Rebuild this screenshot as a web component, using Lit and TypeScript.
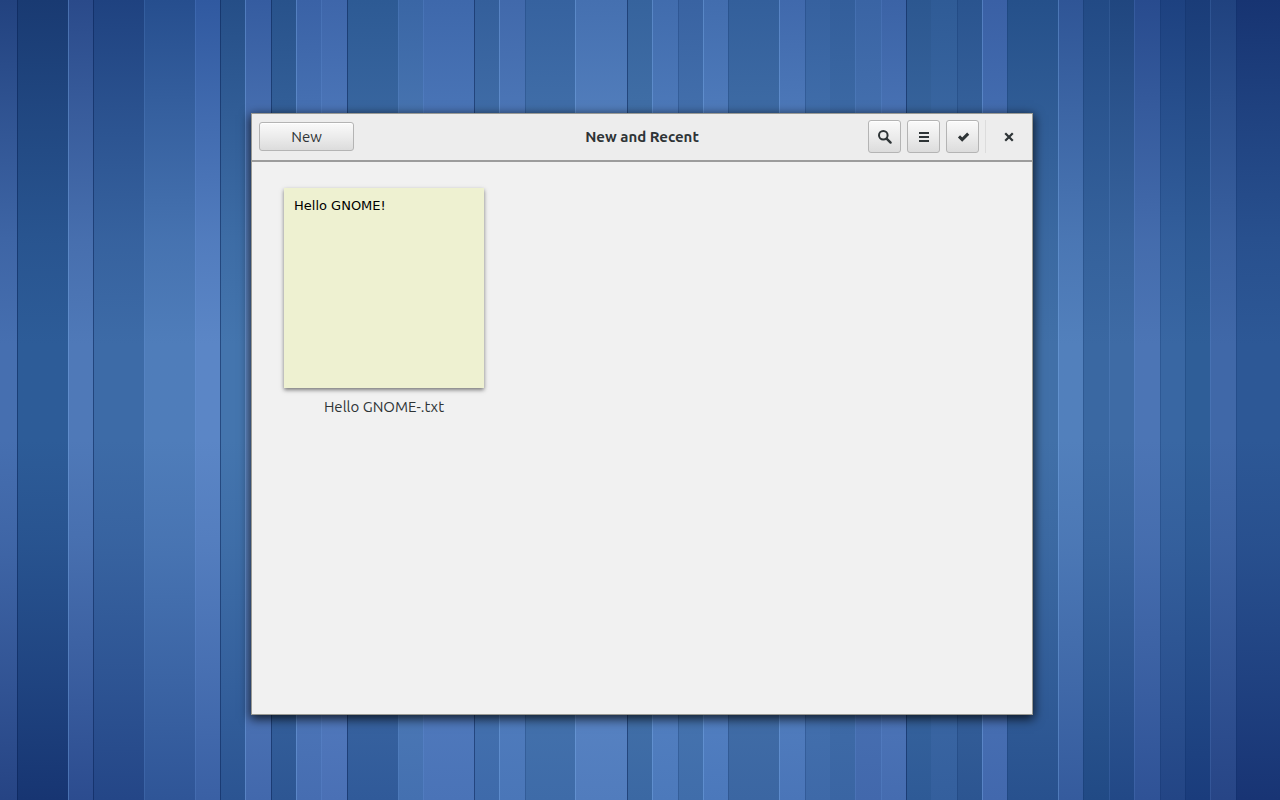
import { LitElement, html, css, svg } from "lit";
import { customElement, property } from "lit/decorators.js";

/* One band of the wallpaper: width in units, colours at the top, middle and bottom, and the kind of left edge. */
type Band = [number, string, string, string, string];

const BANDS: Band[] = [
  [17, "#22427f", "#466fb0", "#264484", "none"],
  [51, "#193a72", "#2d5c98", "#173572", "dark"],
  [25, "#2a4a8a", "#4f79b8", "#2c4c8f", "light"],
  [51, "#1f4280", "#3d6ba7", "#244687", "dark"],
  [51, "#264e8e", "#4f7dba", "#2f5597", "soft"],
  [25, "#3059a0", "#5b86c6", "#3a60a4", "soft"],
  [25, "#254e87", "#4475ae", "#2b5492", "dark"],
  [26, "#355ca0", "#6089c6", "#4268ac", "light"],
  [25, "#28528b", "#4474ad", "#2d5693", "dark"],
  [25, "#3a62a6", "#5a88c6", "#466db1", "light"],
  [26, "#3e66aa", "#5f8ccc", "#4a70b5", "soft"],
  [51, "#2d5a94", "#4a78b0", "#305a99", "dark"],
  [25, "#3a66a5", "#5a88c0", "#4470b0", "soft"],
  [51, "#3e68ab", "#5c88c8", "#4a73b7", "soft"],
  [25, "#345f9b", "#5080b8", "#3e6aaa", "dark"],
  [26, "#4169ab", "#5c8ac8", "#4a76b8", "light"],
  [50, "#36629f", "#5080b6", "#3e6ba8", "dim"],
  [52, "#4570b0", "#6592ce", "#517cbd", "light"],
  [25, "#36639d", "#5080b4", "#3b68a3", "dark"],
  [26, "#416cad", "#5f8dcc", "#4c79bb", "light"],
  [25, "#3963a2", "#5282ba", "#406daa", "dim"],
  [25, "#426dae", "#6290cf", "#4b78bb", "light"],
  [51, "#335f9b", "#4e7db2", "#3b66a2", "dim"],
  [26, "#4069ac", "#6090cc", "#4a75b8", "light"],
  [25, "#36619f", "#4f80ba", "#3e69a8", "dim"],
  [25, "#335e9b", "#4a7ab2", "#3a65a3", "none"],
  [26, "#3a64a4", "#5280bc", "#4268ac", "soft"],
  [25, "#3b63a6", "#5c88c8", "#456cb0", "soft"],
  [25, "#2c5790", "#4675ac", "#2e5a96", "dark"],
  [26, "#2f5b96", "#4876b0", "#345f9d", "none"],
  [25, "#2a548f", "#4674ac", "#2c5591", "dim"],
  [25, "#3a60a5", "#5280c0", "#4268ad", "light"],
  [51, "#25508a", "#4170a8", "#28518e", "dim"],
  [25, "#2f5596", "#5280bc", "#355b9d", "light"],
  [26, "#224a85", "#3a68a2", "#214a85", "dim"],
  [25, "#20467f", "#3e6ba5", "#224886", "soft"],
  [26, "#284b8e", "#4c75b5", "#2f5296", "soft"],
  [25, "#1d4180", "#3967a3", "#234585", "dim"],
  [25, "#1a3c78", "#2f5e98", "#1a3c7c", "dim"],
  [26, "#20427f", "#4068a8", "#274586", "soft"],
  [44, "#173472", "#2d5896", "#183474", "dim"],
];

@customElement("striped-wallpaper")
export class StripedWallpaper extends LitElement {
  static styles = css`
    :host {
      display: flex;
    }
    .band {
      flex: 1 1 0;
      box-sizing: border-box;
      min-width: 0;
    }
    .dark {
      box-shadow: inset 1px 0 rgba(8, 32, 84, 0.5);
    }
    .dim {
      box-shadow: inset 1px 0 rgba(8, 40, 96, 0.22);
    }
    .light {
      box-shadow: inset 1px 0 rgba(130, 180, 240, 0.35);
    }
    .soft {
      box-shadow: inset 1px 0 rgba(120, 170, 235, 0.16);
    }
  `;

  render() {
    return BANDS.map(
      ([size, top, middle, bottom, edge]) => html`<div
        class="band ${edge}"
        style="flex-grow:${size};background:linear-gradient(${top}, color-mix(in srgb, ${top} 62%, ${middle}) 14%, color-mix(in srgb, ${top} 22%, ${middle}) 30%, ${middle} 43%, ${middle} 55%, color-mix(in srgb, ${bottom} 22%, ${middle}) 68%, color-mix(in srgb, ${bottom} 62%, ${middle}) 85%, ${bottom})"
      ></div>`
    );
  }
}

const GLYPHS: Record<string, unknown> = {
  search: svg`<circle cx="7.3" cy="7.3" r="4.3" fill="none" stroke="currentColor" stroke-width="2"/><path d="M10.6 10.6L14.6 14.6" fill="none" stroke="currentColor" stroke-width="2.4" stroke-linecap="round"/>`,
  menu: svg`<path d="M4 4h10v2H4zM4 8h10v2H4zM4 12h10v2H4z" fill="currentColor"/>`,
  check: svg`<path d="M5 8.4L8.2 11.6L14.2 5.6" fill="none" stroke="currentColor" stroke-width="3"/>`,
  close: svg`<path d="M6 6L12 12M12 6L6 12" fill="none" stroke="currentColor" stroke-width="2.2" stroke-linecap="square"/>`,
};

@customElement("symbolic-icon")
export class SymbolicIcon extends LitElement {
  @property() name = "";

  static styles = css`
    :host {
      display: block;
      width: 17px;
      height: 17px;
    }
    .glyph {
      display: block;
      width: 100%;
      height: 100%;
    }
  `;

  render() {
    return html`<svg class="glyph" viewBox="0 0 17 17" aria-hidden="true">${GLYPHS[this.name]}</svg>`;
  }
}

@customElement("app-root")
export class AppRoot extends LitElement {
  static styles = css`
    :host {
      display: grid;
      box-sizing: border-box;
      min-height: 100vh;
      font: 15px/20px Ubuntu, "Noto Sans", sans-serif;
      color: #2e3436;
    }
    .wallpaper,
    .desktop {
      grid-area: 1 / 1;
    }
    .desktop {
      display: grid;
      padding: 113px 247px 85px 251px;
      z-index: 1;
    }
    .window {
      display: flex;
      flex-direction: column;
      min-width: 0;
      border: 1px solid #9a9a94;
      background: #f1f1f1;
      box-shadow: 0 3px 10px 1px rgba(0, 0, 0, 0.75);
    }
    .header {
      display: grid;
      grid-template-columns: 1fr auto 1fr;
      align-items: center;
      padding: 6px 7px 7px;
      background: #ededed;
      border-bottom: 2px solid #9c9c9c;
    }
    .title {
      margin: 0;
      font-size: 15px;
      line-height: 20px;
      font-weight: 700;
    }
    .actions {
      display: flex;
      justify-content: flex-end;
      gap: 6px;
    }
    .button {
      display: grid;
      place-items: center;
      box-sizing: border-box;
      width: 33px;
      height: 33px;
      padding: 0;
      border: 1px solid #b4b4b4;
      border-radius: 3px;
      background: linear-gradient(#fafafa, #ececec 50%, #dcdcdc);
      box-shadow: inset 0 1px #ffffff;
      font: inherit;
      color: inherit;
    }
    .new {
      width: 95px;
      height: 29px;
    }
    .flat {
      border-color: transparent;
      background: none;
      box-shadow: none;
    }
    .separator {
      width: 1px;
      background: #dcdcdc;
    }
    .notes {
      display: flex;
      flex-wrap: wrap;
      flex: 1;
      align-content: flex-start;
      gap: 32px;
      padding: 26px 32px;
    }
    .note {
      margin: 0;
      width: 200px;
      text-align: center;
    }
    .paper {
      box-sizing: border-box;
      aspect-ratio: 1;
      margin: 0 0 9px;
      padding: 10px;
      background: #eef1d1;
      box-shadow: 0 2px 4px rgba(0, 0, 0, 0.5);
      font: 13px/16px "DejaVu Sans", sans-serif;
      color: #000;
      text-align: left;
    }
  `;

  render() {
    return html`
      <striped-wallpaper class="wallpaper"></striped-wallpaper>
      <div class="desktop">
        <main class="window">
          <header class="header">
            <button class="button new">New</button>
            <h1 class="title">New and Recent</h1>
            <div class="actions">
              <button class="button" aria-label="Search"><symbolic-icon name="search"></symbolic-icon></button>
              <button class="button" aria-label="View as list"><symbolic-icon name="menu"></symbolic-icon></button>
              <button class="button" aria-label="Select"><symbolic-icon name="check"></symbolic-icon></button>
              <span class="separator"></span>
              <button class="button flat" aria-label="Close"><symbolic-icon name="close"></symbolic-icon></button>
            </div>
          </header>
          <section class="notes">
            <figure class="note">
              <p class="paper">Hello GNOME!</p>
              <figcaption>Hello GNOME-.txt</figcaption>
            </figure>
          </section>
        </main>
      </div>
    `;
  }
}
